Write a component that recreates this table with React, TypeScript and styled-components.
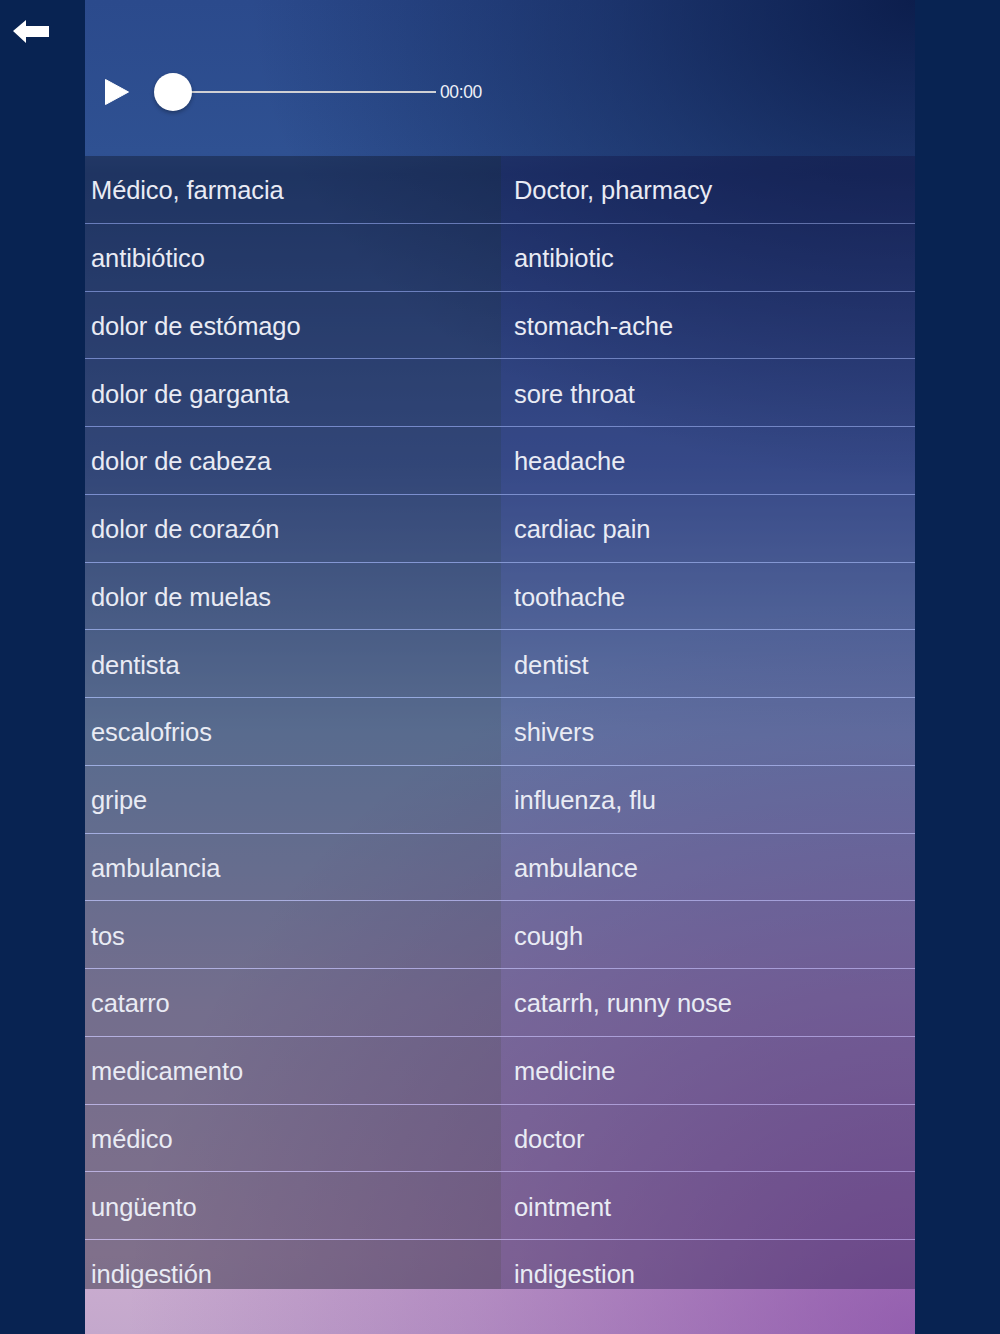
import React from "react";
import styled, { createGlobalStyle } from "styled-components";

const Global = createGlobalStyle`
  html, body { margin: 0; padding: 0; background: #082352; }
  body { font-family: "Liberation Sans", Arial, sans-serif; }
  * { box-sizing: border-box; }
`;

const Page = styled.div`
  width: 1000px;
  height: 1334px;
  display: grid;
  grid-template-columns: 85px 830px 85px;
  background: #082352;
  overflow: hidden;
`;

const Side = styled.div`
  padding: 18px 0 0 12px;
`;

const BackBtn = styled.button`
  border: 0;
  background: none;
  padding: 0;
  width: 38px;
  height: 28px;
  cursor: pointer;
  display: block;
`;

const Panel = styled.main`
  display: flex;
  flex-direction: column;
  height: 1334px;
  position: relative;
  background: linear-gradient(
    180deg,
    #2b4a8c 0%,
    #2f5192 11.5%,
    #2a4a8c 13%,
    #4a68b0 35%,
    #8aa6d6 55%,
    #b6aad4 75%,
    #cbadd0 94%,
    #c4a8cc 100%
  );
  &::before {
    content: "";
    position: absolute;
    inset: 0;
    background:
      radial-gradient(ellipse 80% 36% at 100% 0%, rgba(8, 24, 68, 0.88) 0%, rgba(8, 24, 68, 0.45) 45%, rgba(8, 24, 68, 0) 100%),
      radial-gradient(ellipse 95% 55% at 100% 100%, rgba(115, 45, 155, 0.6) 0%, rgba(115, 45, 155, 0.25) 55%, rgba(115, 45, 155, 0) 100%);
    pointer-events: none;
  }
`;

const Header = styled.header`
  position: relative;
  height: 156px;
  display: flex;
  align-items: center;
  padding: 28px 0 0 19px;
  flex-shrink: 0;
`;

const PlayBtn = styled.button`
  border: 0;
  background: none;
  padding: 0;
  width: 26px;
  height: 28px;
  display: flex;
  cursor: pointer;
`;

const Slider = styled.div`
  position: relative;
  margin-left: 24px;
  width: 282px;
  height: 40px;
`;

const Track = styled.div`
  position: absolute;
  left: 20px;
  right: 0;
  top: 50%;
  height: 2px;
  margin-top: -1px;
  background: #d0d0d4;
`;

const Knob = styled.div`
  position: absolute;
  left: 0;
  top: 1px;
  width: 38px;
  height: 38px;
  border-radius: 50%;
  background: #fff;
  box-shadow: 0 2px 4px rgba(0, 0, 0, 0.3);
`;

const Time = styled.span`
  margin-left: 4px;
  color: #eef0f7;
  font-size: 17.5px;
  letter-spacing: -0.4px;
`;

const List = styled.div`
  position: relative;
  display: flex;
  flex-direction: column;
`;

const Row = styled.div<{ $last?: boolean }>`
  display: grid;
  grid-template-columns: 416px 414px;
  height: ${(p) => (p.$last ? "49px" : "67.75px")};
  border-bottom: ${(p) => (p.$last ? "0" : "1px solid rgba(175, 182, 238, 0.45)")};
`;

const Cell = styled.div<{ $side: "left" | "right" }>`
  display: flex;
  align-items: center;
  padding: 3px 0 0 ${(p) => (p.$side === "left" ? "6px" : "13px")};
  background: ${(p) =>
    p.$side === "left" ? "rgba(15, 20, 35, 0.4)" : "rgba(18, 14, 58, 0.34)"};
  color: #e9ebf4;
  font-size: 25.5px;
  letter-spacing: -0.1px;
  white-space: nowrap;
`;

const LastCell = styled(Cell)`
  align-items: flex-end;
  padding-bottom: 0;
`;

const rows: [string, string][] = [
  ["Médico, farmacia", "Doctor, pharmacy"],
  ["antibiótico", "antibiotic"],
  ["dolor de estómago", "stomach-ache"],
  ["dolor de garganta", "sore throat"],
  ["dolor de cabeza", "headache"],
  ["dolor de corazón", "cardiac pain"],
  ["dolor de muelas", "toothache"],
  ["dentista", "dentist"],
  ["escalofrios", "shivers"],
  ["gripe", "influenza, flu"],
  ["ambulancia", "ambulance"],
  ["tos", "cough"],
  ["catarro", "catarrh, runny nose"],
  ["medicamento", "medicine"],
  ["médico", "doctor"],
  ["ungüento", "ointment"],
  ["indigestión", "indigestion"],
];

export default function App() {
  return (
    <>
      <Global />
      <Page>
        <Side>
          <BackBtn aria-label="Back">
            <svg width="38" height="28" viewBox="0 0 38 28">
              <path d="M1 13 L14 2 L14 8 L37 8 L37 19 L14 19 L14 25 Z" fill="#fff" />
            </svg>
          </BackBtn>
        </Side>
        <Panel>
          <Header>
            <PlayBtn aria-label="Play">
              <svg width="26" height="28" viewBox="0 0 26 28">
                <path d="M1.5 1.5 L24.5 14 L1.5 26.5 Z" fill="#fff" stroke="#fff" strokeWidth="1" strokeLinejoin="round" />
              </svg>
            </PlayBtn>
            <Slider>
              <Track />
              <Knob />
            </Slider>
            <Time>00:00</Time>
          </Header>
          <List>
            {rows.map(([es, en], i) => {
              const last = i === rows.length - 1;
              const C = last ? LastCell : Cell;
              return (
                <Row key={i} $last={last}>
                  <C $side="left">{es}</C>
                  <C $side="right">{en}</C>
                </Row>
              );
            })}
          </List>
        </Panel>
        <Side />
      </Page>
    </>
  );
}
